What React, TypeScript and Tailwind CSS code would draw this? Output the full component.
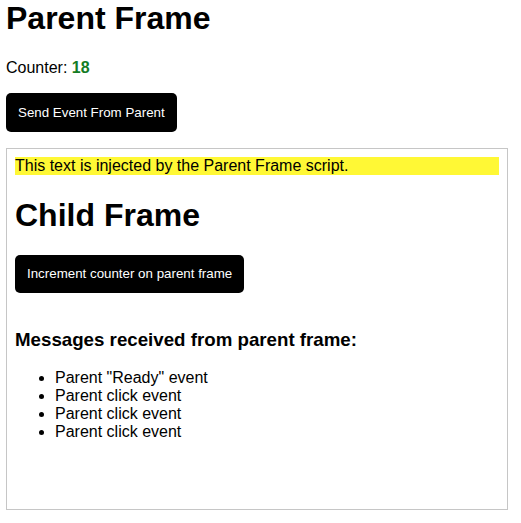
export default function App() {
  return (
    <div className="font-['Liberation_Sans',Arial,sans-serif] text-black bg-white w-[521px] h-[523px] px-[6px] overflow-hidden">
      <h1 className="m-0 text-[32px] leading-[37px] font-bold">Parent Frame</h1>
      <p className="mt-[22px] text-[16px] leading-[18px]">
        Counter: <b className="text-[#147c24] font-bold">18</b>
      </p>
      <button className="mt-[16px] block h-[39px] px-[12px] bg-black text-white text-[13.333px] rounded-[5px]">
        Send Event From Parent
      </button>
      <div className="mt-[16px] w-[502px] h-[362px] border border-[#c6c6c6] p-[8px]">
        <div className="h-[18px] leading-[18px] text-[16px] bg-[#fff835]">
          This text is injected by the Parent Frame script.
        </div>
        <h1 className="mt-[22px] text-[32px] leading-[37px] font-bold">Child Frame</h1>
        <button className="mt-[21px] block h-[38px] px-[12px] bg-black text-white text-[13.333px] rounded-[5px]">
          Increment counter on parent frame
        </button>
        <h3 className="mt-[36px] text-[18.72px] leading-[21px] font-bold">
          Messages received from parent frame:
        </h3>
        <ul className="mt-[19px] pl-[40px] list-disc text-[16px] leading-[18px]">
          <li>Parent "Ready" event</li>
          <li>Parent click event</li>
          <li>Parent click event</li>
          <li>Parent click event</li>
        </ul>
      </div>
    </div>
  );
}
